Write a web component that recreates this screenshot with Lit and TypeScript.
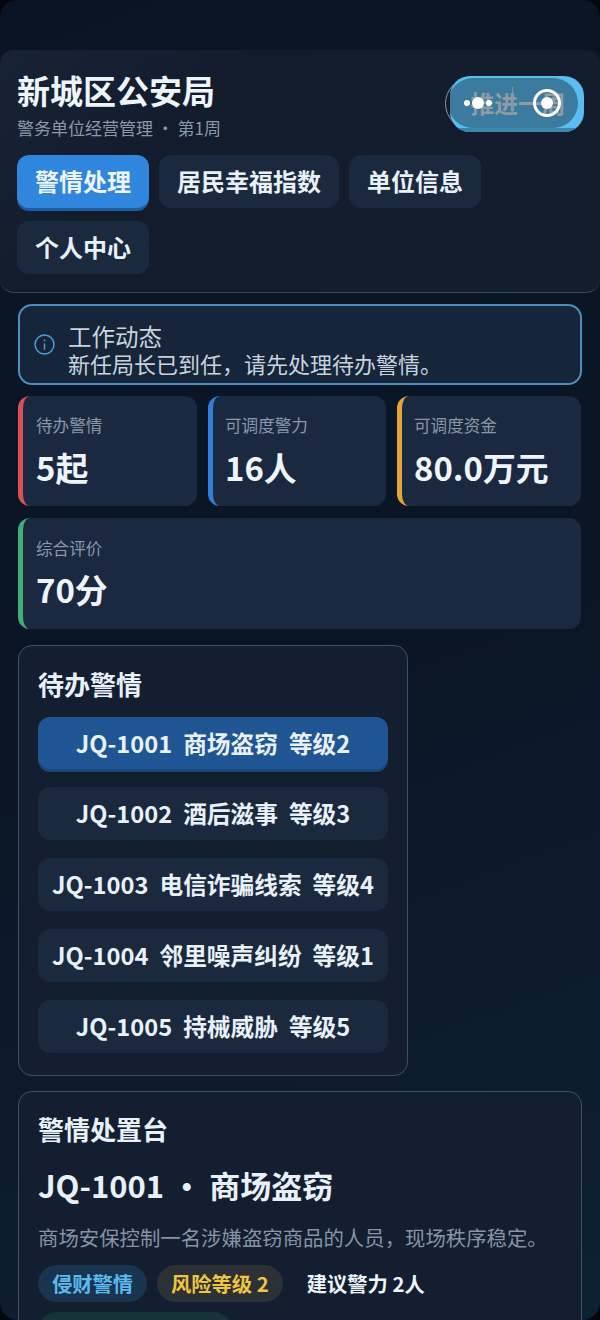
import { LitElement, html, css } from "lit";
import { customElement } from "lit/decorators.js";

const stats = [
  { l: "待办警情", v: "5起", c: "#d9505a" },
  { l: "可调度警力", v: "16人", c: "#2f7fd6" },
  { l: "可调度资金", v: "80.0万元", c: "#e5a535" },
  { l: "综合评价", v: "70分", c: "#3fae78" },
];
const items = [
  ["JQ-1001", "商场盗窃", "等级2"],
  ["JQ-1002", "酒后滋事", "等级3"],
  ["JQ-1003", "电信诈骗线索", "等级4"],
  ["JQ-1004", "邻里噪声纠纷", "等级1"],
  ["JQ-1005", "持械威胁", "等级5"],
];

@customElement("app-root")
export class AppRoot extends LitElement {
  static styles = css`
    :host {
      display: block;
      width: 600px;
      height: 1320px;
      overflow: hidden;
      font-family: "Noto Sans CJK SC", "Noto Sans", sans-serif;
      color: #e8f0fa;
      background: #04070c;
    }
    .screen {
      height: 1320px;
      overflow: hidden;
      border-radius: 18px;
      background: linear-gradient(160deg, #0b1424 0%, #0a1626 50%, #0f2033 100%);
      padding-top: 50px;
      box-sizing: border-box;
    }
    .head {
      position: relative;
      background: linear-gradient(135deg, #172336 0%, #121c2d 30%, #121d2e 100%);
      border-bottom: 1px solid #33475c;
      border-radius: 14px;
      padding: 18px 17px 18px;
      height: 243px;
      box-sizing: border-box;
    }
    .title { font-size: 33px; font-weight: 700; line-height: 44px; color: #eef4fb; }
    .sub { font-size: 17px; line-height: 24px; color: #8b98aa; margin-top: 4px; }
    .tabs { display: flex; flex-wrap: wrap; gap: 13px 10px; margin-top: 15px; }
    .tab {
      height: 53px; padding: 0 18px; border-radius: 12px; background: #1b293e;
      font-size: 24px; font-weight: 700; line-height: 52px; color: #e8f0fa;
    }
    .tab.on { background: #2f86dc; box-shadow: 0 3px 0 #1d5d9f; color: #eef5fc; }
    .adv {
      position: absolute; left: 450px; top: 26px; width: 134px; height: 56px; box-sizing: border-box;
      border-radius: 20px; background: #5bbcf0; overflow: hidden;
    }
    .adv .in {
      position: absolute; left: -2px; top: 2px; width: 130px; height: 50px; border-radius: 25px;
      background: #3a7b9f; font-size: 23.7px; font-weight: 700; line-height: 50px; text-align: center; color: #8f9ca3;
      white-space: nowrap; padding-left: 10px; box-sizing: border-box;
    }
    .adv-bot { position: absolute; left: 0; right: 0; bottom: 0; height: 4px; background: #3b86ad; }
    .ring { position: absolute; left: 445px; top: 27px; width: 53px; height: 53px; border-radius: 50%; border: 1px solid #8a97a3; box-sizing: border-box; clip-path: inset(0 45px 0 0); }
    .line { position: absolute; left: 512px; top: 37px; width: 1px; height: 28px; background: #7d98aa; }
    .dot { position: absolute; border-radius: 50%; background: #fff; }
    .d1 { left: 464px; top: 50px; width: 6px; height: 6px; }
    .d2 { left: 472px; top: 47px; width: 12px; height: 12px; }
    .d3 { left: 486px; top: 50px; width: 6px; height: 6px; }
    .d4 { left: 541px; top: 47px; width: 12px; height: 12px; }
    .target { position: absolute; left: 533px; top: 39px; width: 28px; height: 28px; box-sizing: border-box; border: 3px solid #fff; border-radius: 50%; }
    .main { padding: 11px 18px 0; }
    .alert {
      height: 81px; box-sizing: border-box; border: 2px solid #4a8fc0; border-radius: 14px; background: #16253a;
      display: flex; align-items: center; gap: 13px; padding: 0 14px; font-size: 22px; line-height: 27px; color: #c8d3df;
    }
    .alert svg { flex: none; }
    .alert-text { padding-top: 11px; }
    .at { font-size: 23.5px; }
    .stats { display: grid; grid-template-columns: 179px 178px 184px; gap: 12px 11px; margin-top: 11px; }
    .stat {
      height: 110px; box-sizing: border-box; background: #1b2940; border-radius: 12px; border-left: 5px solid; padding: 17px 12px;
    }
    .stat.first { padding-left: 13px; }
    .stat.wide { grid-column: 1 / -1; height: 111px; width: 563px; padding-top: 18px; padding-left: 13px; }
    .wide .v { margin-top: 7px; }
    .l { font-size: 16.6px; line-height: 24px; color: #8a97aa; }
    .v { font-size: 32.9px; font-weight: 700; line-height: 44px; margin-top: 8px; color: #eef4fb; }
    .panel { box-sizing: border-box; background: #131e30; border: 1px solid #3c5268; border-radius: 14px; padding: 19px 19px 0; }
    .queue { width: 390px; height: 431px; margin-top: 16px; }
    .pt { font-size: 26px; font-weight: 700; line-height: 38px; color: #e8f0fa; }
    .list { display: flex; flex-direction: column; gap: 18px; margin-top: 14px; }
    .item {
      height: 53px; box-sizing: border-box; padding-bottom: 1px; border-radius: 12px; background: #1b293e; font-size: 23.7px; font-weight: 700;
      display: flex; align-items: center; justify-content: center; gap: 11px; color: #e8f0fa; white-space: pre;
    }
    .item.on { background: #1f5593; box-shadow: 0 3px 0 #1a477a; height: 52px; }
    .desk { height: 300px; margin-top: 15px; padding-top: 18px; }
    .h2 { font-size: 31px; font-weight: 700; line-height: 46px; margin-top: 14px; color: #e8f0fa; }
    .p { font-size: 20.4px; line-height: 30px; color: #8694a6; margin-top: 14px; white-space: nowrap; }
    .chips { display: flex; flex-wrap: wrap; gap: 10px; margin-top: 13px; }
    .chip { height: 37px; line-height: 37px; border-radius: 19px; padding: 0 14px; font-size: 20.3px; font-weight: 700; white-space: nowrap; }
    .c1 { background: #19344f; color: #5cb8ee; width: 109px; box-sizing: border-box; padding: 0 14px; }
    .c2 { background: #2c3136; color: #f0c540; }
    .c3 { color: #eef4fb; }
    .c4 { background: #173238; width: 194px; box-sizing: border-box; }
  `;

  render() {
    return html`
      <div class="screen">
        <div class="head">
          <div class="title">新城区公安局</div>
          <div class="sub">警务单位经营管理 · 第1周</div>
          <div class="tabs">
            <div class="tab on">警情处理</div>
            <div class="tab">居民幸福指数</div>
            <div class="tab">单位信息</div>
            <div class="tab">个人中心</div>
          </div>
          <div class="adv"><div class="adv-bot"></div><div class="in">推进一周</div></div>
          <div class="ring"></div>
          <div class="line"></div>
          <div class="dot d1"></div>
          <div class="dot d2"></div>
          <div class="dot d3"></div>
          <div class="target"></div>
          <div class="dot d4"></div>
        </div>
        <div class="main">
          <div class="alert">
            <svg width="21" height="21" viewBox="0 0 20 20" fill="none" stroke="#4a9fd8" stroke-width="1.4">
              <circle cx="10" cy="10" r="9"></circle>
              <path d="M10 9v6M10 5.2v1.6"></path>
            </svg>
            <div class="alert-text">
              <div class="at">工作动态</div>
              <div>新任局长已到任，请先处理待办警情。</div>
            </div>
          </div>
          <div class="stats">
            ${stats.map(
              (s, i) => html`<div class="stat ${i === 3 ? "wide" : ""} ${i === 0 ? "first" : ""}" style="border-left-color:${s.c}">
                <div class="l">${s.l}</div>
                <div class="v">${s.v}</div>
              </div>`
            )}
          </div>
          <div class="panel queue">
            <div class="pt">待办警情</div>
            <div class="list">
              ${items.map(
                (it, i) => html`<div class="item ${i === 0 ? "on" : ""}"><span>${it[0]}</span><span>${it[1]}</span><span>${it[2]}</span></div>`
              )}
            </div>
          </div>
          <div class="panel desk">
            <div class="pt">警情处置台</div>
            <div class="h2">JQ-1001 · 商场盗窃</div>
            <div class="p">商场安保控制一名涉嫌盗窃商品的人员，现场秩序稳定。</div>
            <div class="chips">
              <div class="chip c1">侵财警情</div>
              <div class="chip c2">风险等级 2</div>
              <div class="chip c3">建议警力 2人</div>
              <div class="chip c4"></div>
            </div>
          </div>
        </div>
      </div>
    `;
  }
}
